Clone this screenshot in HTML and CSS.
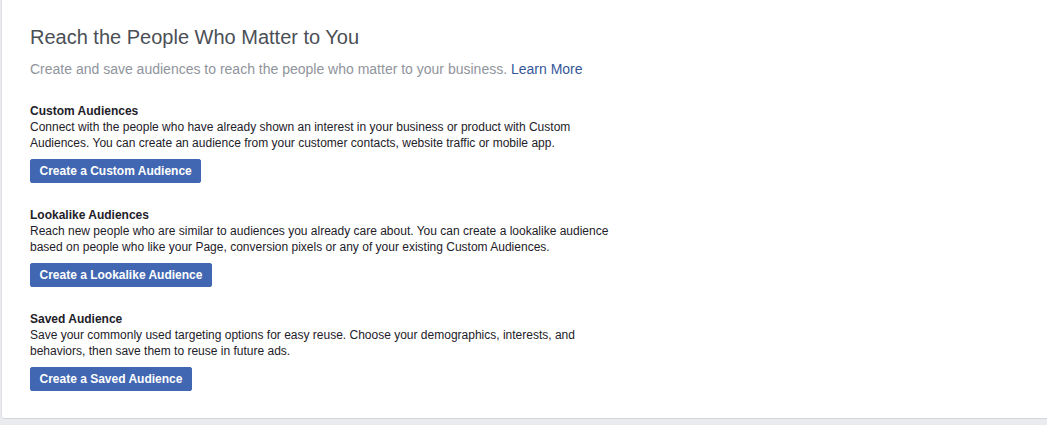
FILE: index.html
```html
<!DOCTYPE html>
<html lang="en">
<head>
    <meta charset="UTF-8">
    <title>Audiences</title>
    <link rel="stylesheet" href="styles.css">
</head>
<body>
    <div class="card">
        <h1>Reach the People Who Matter to You</h1>
        <p class="intro">Create and save audiences to reach the people who matter to your business. <a href="#">Learn More</a></p>

        <div class="section">
            <h2>Custom Audiences</h2>
            <p>Connect with the people who have already shown an interest in your business or product with Custom Audiences. You can create an audience from your customer contacts, website traffic or mobile app.</p>
            <button type="button">Create a Custom Audience</button>
        </div>

        <div class="section">
            <h2>Lookalike Audiences</h2>
            <p>Reach new people who are similar to audiences you already care about. You can create a lookalike audience based on people who like your Page, conversion pixels or any of your existing Custom Audiences.</p>
            <button type="button">Create a Lookalike Audience</button>
        </div>

        <div class="section">
            <h2>Saved Audience</h2>
            <p>Save your commonly used targeting options for easy reuse. Choose your demographics, interests, and behaviors, then save them to reuse in future ads.</p>
            <button type="button">Create a Saved Audience</button>
        </div>
    </div>
</body>
</html>
```

FILE: styles.css
```css
body {
    margin: 0;
    background-color: #e9ebee;
    font-family: "Liberation Sans", Arial, sans-serif;
    color: #1d2129;
}
.card {
    margin-left: 1px;
    height: 419px;
    box-sizing: border-box;
    background: white;
    border-left: 1px solid #dddfe2;
    border-bottom: 1px solid #d3d6db;
    border-radius: 0 0 0 3px;
    padding: 25px 28px 0;
}
h1 {
    margin: 0;
    font-size: 20px;
    line-height: 24px;
    font-weight: normal;
    color: #4b4f56;
}
.intro {
    margin: 11px 0 0;
    font-size: 14px;
    line-height: 18px;
    color: #90949c;
}
.intro a {
    color: #365899;
    text-decoration: none;
}
.section {
    margin-top: 25px;
}
.section + .section {
    margin-top: 24px;
}
h2 {
    margin: 0;
    font-size: 12px;
    line-height: 16px;
    font-weight: bold;
}
.section p {
    margin: 0;
    max-width: 590px;
    font-size: 12px;
    line-height: 16px;
}
button {
    display: block;
    margin-top: 8px;
    height: 24px;
    padding: 0 8.5px;
    background-color: #4267b2;
    border: 1px solid #4267b2;
    border-radius: 2px;
    color: white;
    font-family: inherit;
    font-size: 12px;
    font-weight: bold;
    cursor: pointer;
}
```
